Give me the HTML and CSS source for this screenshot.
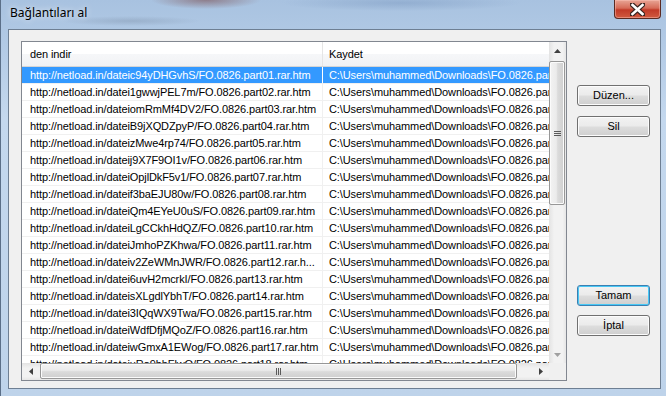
FILE: index.html
```html
<!DOCTYPE html>
<html lang="tr">
<head>
    <meta charset="UTF-8">
    <meta name="viewport" content="width=device-width, initial-scale=1.0">
    <title>Bağlantıları al</title>
    <link rel="stylesheet" href="styles.css">
</head>
<body>

<div class="window">
    <div class="titlebar">
        <span class="title">Bağlantıları al</span>
        <div class="close-btn">
            <svg width="15" height="13" viewBox="0 0 15 13">
                <path d="M2 1.5 L13 11.5 M13 1.5 L2 11.5" stroke="#3a2420" stroke-width="5" stroke-linecap="square"/>
                <path d="M2.5 2 L12.5 11 M12.5 2 L2.5 11" stroke="#ffffff" stroke-width="2.6" stroke-linecap="square"/>
            </svg>
        </div>
    </div>

    <div class="client">
        <div class="listview">
            <div class="lv-main">
                <div class="lv-content">
                    <div class="lv-header">
                        <div class="cell c1">den indir</div>
                        <div class="cell c2">Kaydet</div>
                    </div>
                    <div class="row selected"><div class="cell c1">http://netload.in/dateic94yDHGvhS/FO.0826.part01.rar.htm</div><div class="cell c2">C:\Users\muhammed\Downloads\FO.0826.part01.rar.htm</div></div>
                    <div class="row"><div class="cell c1">http://netload.in/datei1gwwjPEL7m/FO.0826.part02.rar.htm</div><div class="cell c2">C:\Users\muhammed\Downloads\FO.0826.part02.rar.htm</div></div>
                    <div class="row"><div class="cell c1">http://netload.in/dateiomRmMf4DV2/FO.0826.part03.rar.htm</div><div class="cell c2">C:\Users\muhammed\Downloads\FO.0826.part03.rar.htm</div></div>
                    <div class="row"><div class="cell c1">http://netload.in/dateiB9jXQDZpyP/FO.0826.part04.rar.htm</div><div class="cell c2">C:\Users\muhammed\Downloads\FO.0826.part04.rar.htm</div></div>
                    <div class="row"><div class="cell c1">http://netload.in/dateizMwe4rp74/FO.0826.part05.rar.htm</div><div class="cell c2">C:\Users\muhammed\Downloads\FO.0826.part05.rar.htm</div></div>
                    <div class="row"><div class="cell c1">http://netload.in/dateij9X7F9OI1v/FO.0826.part06.rar.htm</div><div class="cell c2">C:\Users\muhammed\Downloads\FO.0826.part06.rar.htm</div></div>
                    <div class="row"><div class="cell c1">http://netload.in/dateiOpjlDkF5v1/FO.0826.part07.rar.htm</div><div class="cell c2">C:\Users\muhammed\Downloads\FO.0826.part07.rar.htm</div></div>
                    <div class="row"><div class="cell c1">http://netload.in/dateif3baEJU80w/FO.0826.part08.rar.htm</div><div class="cell c2">C:\Users\muhammed\Downloads\FO.0826.part08.rar.htm</div></div>
                    <div class="row"><div class="cell c1">http://netload.in/dateiQm4EYeU0uS/FO.0826.part09.rar.htm</div><div class="cell c2">C:\Users\muhammed\Downloads\FO.0826.part09.rar.htm</div></div>
                    <div class="row"><div class="cell c1">http://netload.in/dateiLgCCkhHdQZ/FO.0826.part10.rar.htm</div><div class="cell c2">C:\Users\muhammed\Downloads\FO.0826.part10.rar.htm</div></div>
                    <div class="row"><div class="cell c1">http://netload.in/dateiJmhoPZKhwa/FO.0826.part11.rar.htm</div><div class="cell c2">C:\Users\muhammed\Downloads\FO.0826.part11.rar.htm</div></div>
                    <div class="row"><div class="cell c1">http://netload.in/dateiv2ZeWMnJWR/FO.0826.part12.rar.h...</div><div class="cell c2">C:\Users\muhammed\Downloads\FO.0826.part12.rar.htm</div></div>
                    <div class="row"><div class="cell c1">http://netload.in/datei6uvH2mcrkI/FO.0826.part13.rar.htm</div><div class="cell c2">C:\Users\muhammed\Downloads\FO.0826.part13.rar.htm</div></div>
                    <div class="row"><div class="cell c1">http://netload.in/dateisXLgdlYbhT/FO.0826.part14.rar.htm</div><div class="cell c2">C:\Users\muhammed\Downloads\FO.0826.part14.rar.htm</div></div>
                    <div class="row"><div class="cell c1">http://netload.in/datei3IQqWX9Twa/FO.0826.part15.rar.htm</div><div class="cell c2">C:\Users\muhammed\Downloads\FO.0826.part15.rar.htm</div></div>
                    <div class="row"><div class="cell c1">http://netload.in/dateiWdfDfjMQoZ/FO.0826.part16.rar.htm</div><div class="cell c2">C:\Users\muhammed\Downloads\FO.0826.part16.rar.htm</div></div>
                    <div class="row"><div class="cell c1">http://netload.in/dateiwGmxA1EWog/FO.0826.part17.rar.htm</div><div class="cell c2">C:\Users\muhammed\Downloads\FO.0826.part17.rar.htm</div></div>
                    <div class="row"><div class="cell c1">http://netload.in/dateiuRa9bhFlwQ/FO.0826.part18.rar.htm</div><div class="cell c2">C:\Users\muhammed\Downloads\FO.0826.part18.rar.htm</div></div>
                </div>

                <div class="vscroll">
                    <div class="sb-arrow">
                        <svg width="7" height="4" viewBox="0 0 7 4"><path d="M0 4 L3.5 0 L7 4 Z" fill="#404040"/></svg>
                    </div>
                    <div class="v-thumb">
                        <span class="grip-h"></span>
                    </div>
                    <div class="sb-track"></div>
                    <div class="sb-arrow">
                        <svg width="7" height="4" viewBox="0 0 7 4"><path d="M0 0 L7 0 L3.5 4 Z" fill="#a0a0a0"/></svg>
                    </div>
                </div>
            </div>

            <div class="lv-bottom">
                <div class="hscroll">
                    <div class="sb-arrow">
                        <svg width="4" height="7" viewBox="0 0 4 7"><path d="M4 0 L0 3.5 L4 7 Z" fill="#404040"/></svg>
                    </div>
                    <div class="h-thumb">
                        <span class="grip-v"></span>
                    </div>
                    <div class="sb-track"></div>
                    <div class="sb-arrow">
                        <svg width="4" height="7" viewBox="0 0 4 7"><path d="M0 0 L4 3.5 L0 7 Z" fill="#404040"/></svg>
                    </div>
                </div>
                <div class="corner"></div>
            </div>
        </div>

        <div class="side">
            <div class="btn-group top">
                <div class="btn">Düzen...</div>
                <div class="btn">Sil</div>
            </div>
            <div class="btn-group bottom">
                <div class="btn default">Tamam</div>
                <div class="btn">İptal</div>
            </div>
        </div>
    </div>
</div>

</body>
</html>
```

FILE: styles.css
```css
body {
    margin: 0;
    padding: 0;
    background: #b9cfe8;
}
.window {
    width: 666px;
    height: 396px;
    box-sizing: border-box;
    display: flex;
    flex-direction: column;
    padding: 0 5px 7px 7px;
    border-left: 1px solid #5b6f88;
    background:
        radial-gradient(ellipse 55px 9px at 205px 0px, rgba(120, 70, 70, 0.55), transparent),
        radial-gradient(ellipse 70px 5px at 130px 21px, rgba(130, 150, 175, 0.45), transparent),
        radial-gradient(ellipse 120px 8px at 400px 3px, rgba(120, 150, 190, 0.45), transparent),
        linear-gradient(180deg, #a8c2e0 0%, #c4d8ee 30%, #bed3ea 100%);
}
.titlebar {
    height: 29px;
    flex-shrink: 0;
    display: flex;
    justify-content: space-between;
    align-items: flex-start;
}
.title {
    font-family: "Noto Sans", sans-serif;
    font-size: 12px;
    color: #000;
    padding: 4px 0 0 2px;
    text-shadow: 0 0 6px rgba(255, 255, 255, 0.9);
}
.close-btn {
    width: 47px;
    height: 19px;
    box-sizing: border-box;
    border: 1px solid #5a2a22;
    border-top: none;
    border-radius: 0 0 4px 4px;
    background: linear-gradient(180deg, #e8a595 0%, #d66b58 45%, #c23a28 55%, #d05a40 100%);
    box-shadow: inset 0 0 0 1px rgba(255, 200, 190, 0.45);
    display: flex;
    justify-content: center;
    align-items: center;
}
.client {
    flex: 1;
    display: flex;
    align-items: flex-start;
    background: #f0f0f0;
    border: 1px solid #6e7f93;
    padding: 11px 0 0 12px;
}
.listview {
    width: 546px;
    height: 340px;
    box-sizing: border-box;
    border: 1px solid #828790;
    background: #fff;
    display: flex;
    flex-direction: column;
    font-family: "Liberation Sans", Arial, sans-serif;
    font-size: 11px;
}
.lv-main {
    flex: 1;
    display: flex;
    min-height: 0;
}
.lv-content {
    width: 527px;
    overflow: hidden;
}
.lv-header {
    height: 25px;
    box-sizing: border-box;
    display: flex;
    background: linear-gradient(180deg, #ffffff 0%, #ffffff 50%, #f6f7f9 51%, #f1f2f4 100%);
    border-bottom: 1px solid #d5d5d5;
}
.lv-header .cell {
    line-height: 24px;
}
.cell {
    white-space: nowrap;
    overflow: hidden;
    flex-shrink: 0;
    letter-spacing: -0.1px;
}
.c1 {
    width: 301px;
    box-sizing: border-box;
    padding-left: 8px;
    border-right: 1px solid #e5e5e5;
}
.c2 {
    width: 400px;
    padding-left: 6px;
}
.row {
    height: 17px;
    box-sizing: border-box;
    display: flex;
    border-bottom: 1px solid #f0f0f0;
    line-height: 16px;
    color: #000;
}
.row .c1 {
    border-right-color: #f0f0f0;
}
.row.selected .cell {
    background: #3399ff;
    color: #fff;
}
.row.selected .c1 {
    border-right-color: #fff;
}
.vscroll {
    width: 17px;
    display: flex;
    flex-direction: column;
    background: linear-gradient(90deg, #e3e3e3 0%, #f2f2f2 30%, #f2f2f2 80%, #e6e6e6 100%);
}
.sb-arrow {
    width: 17px;
    height: 17px;
    flex-shrink: 0;
    display: flex;
    justify-content: center;
    align-items: center;
}
.vscroll .sb-track,
.hscroll .sb-track {
    flex: 1;
}
.v-thumb {
    height: 144px;
    margin: 2px 1px 0 0;
    box-sizing: border-box;
    border: 1px solid #979797;
    border-radius: 2px;
    background: linear-gradient(90deg, #f3f3f3 0%, #ebebeb 45%, #dbdbdb 55%, #cfcfcf 100%);
    box-shadow: inset 0 0 0 1px #fbfbfb;
    display: flex;
    justify-content: center;
    align-items: center;
}
.grip-h {
    width: 7px;
    height: 5px;
    background: linear-gradient(180deg, #5a5a5a 0 1px, transparent 1px 2px, #5a5a5a 2px 3px, transparent 3px 4px, #5a5a5a 4px 5px);
}
.lv-bottom {
    height: 17px;
    display: flex;
}
.hscroll {
    width: 527px;
    display: flex;
    background: linear-gradient(180deg, #e3e3e3 0%, #f2f2f2 30%, #f2f2f2 80%, #e6e6e6 100%);
}
.h-thumb {
    width: 477px;
    margin: 0 0 1px 1px;
    box-sizing: border-box;
    border: 1px solid #979797;
    border-radius: 2px;
    background: linear-gradient(180deg, #f3f3f3 0%, #ebebeb 45%, #dbdbdb 55%, #cfcfcf 100%);
    box-shadow: inset 0 0 0 1px #fbfbfb;
    display: flex;
    justify-content: center;
    align-items: center;
}
.grip-v {
    width: 5px;
    height: 7px;
    background: linear-gradient(90deg, #5a5a5a 0 1px, transparent 1px 2px, #5a5a5a 2px 3px, transparent 3px 4px, #5a5a5a 4px 5px);
}
.corner {
    flex: 1;
    background: #f0f0f0;
}
.side {
    margin-left: 10px;
    display: flex;
    flex-direction: column;
}
.btn-group {
    display: flex;
    flex-direction: column;
}
.btn-group.top {
    margin-top: 44px;
    gap: 10px;
}
.btn-group.bottom {
    margin-top: 148px;
    gap: 9px;
}
.btn {
    width: 73px;
    height: 21px;
    box-sizing: border-box;
    border: 1px solid #707070;
    border-radius: 3px;
    background: linear-gradient(180deg, #f2f2f2 0%, #ebebeb 48%, #dddddd 52%, #cfcfcf 100%);
    box-shadow: inset 0 0 0 1px #fcfcfc;
    font-family: "Liberation Sans", Arial, sans-serif;
    font-size: 11px;
    line-height: 19px;
    text-align: center;
    color: #000;
}
.btn.default {
    border-color: #3c7fb1;
    box-shadow: inset 0 0 0 1px #48c8f5;
}
```
